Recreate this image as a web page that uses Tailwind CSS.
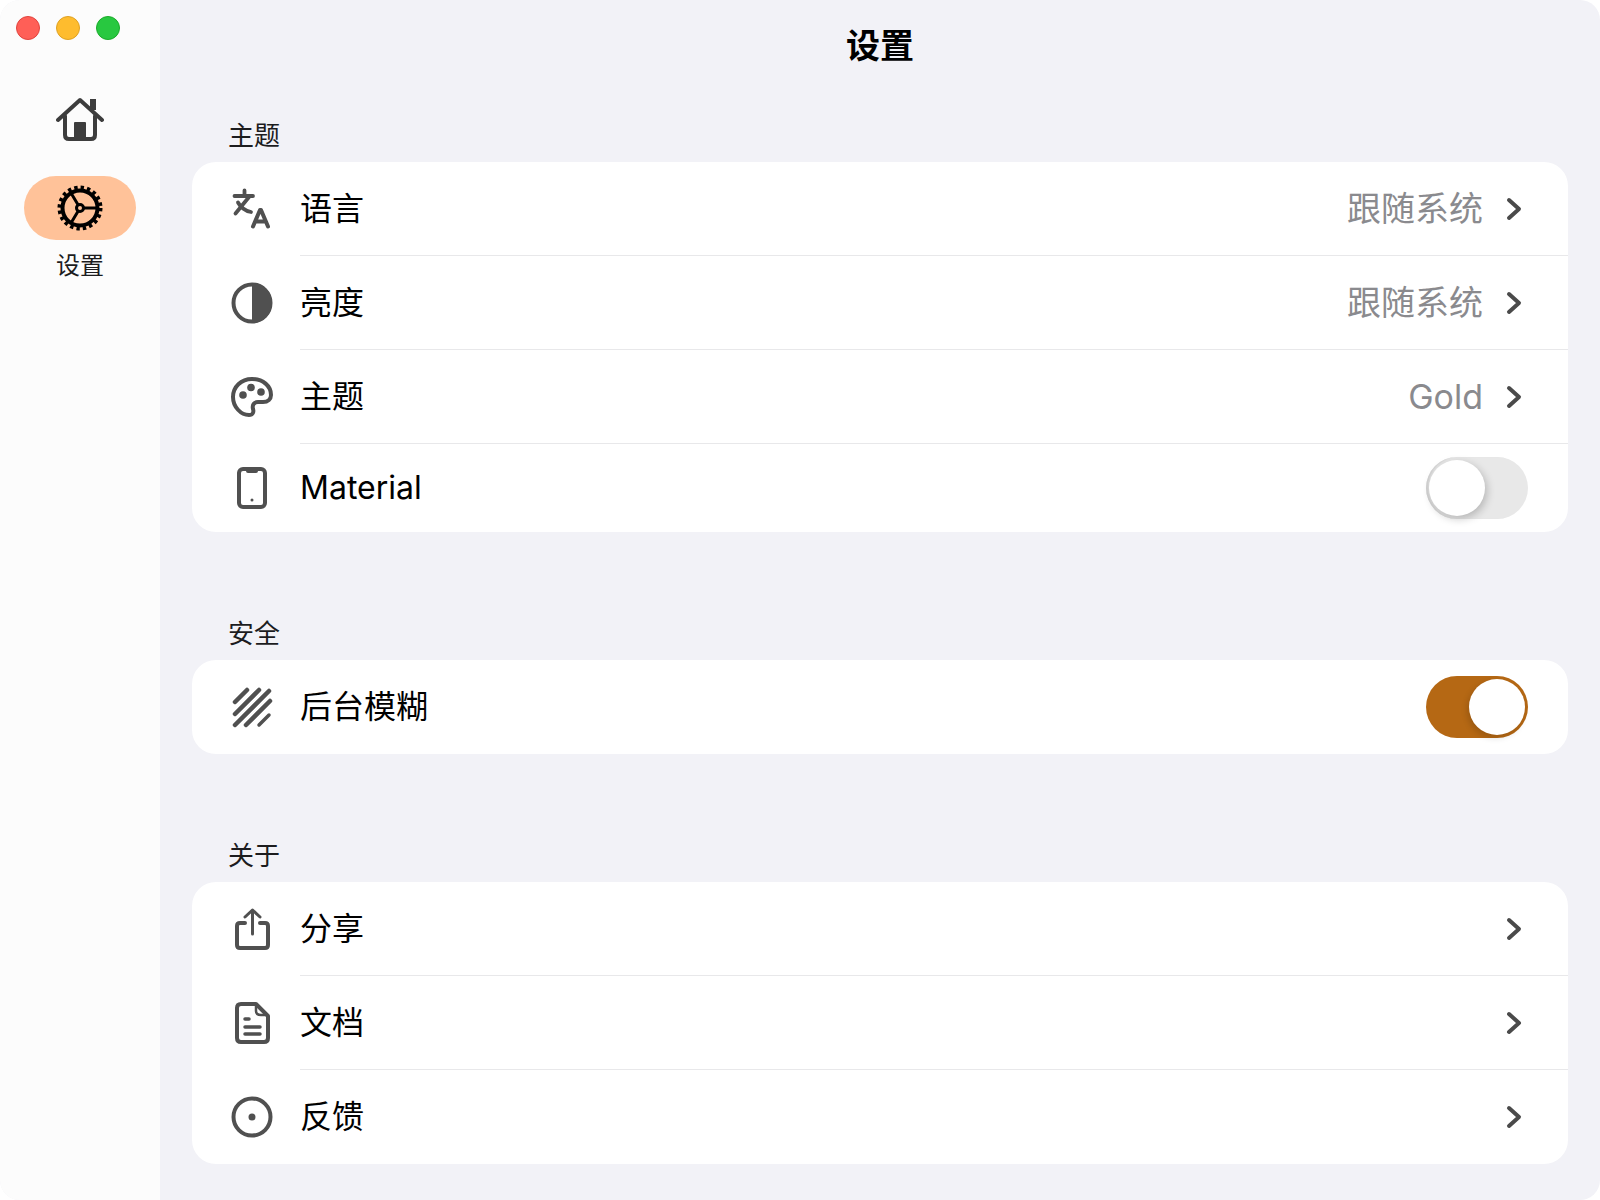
<!DOCTYPE html>
<html lang="zh">
<head>
<meta charset="utf-8">
<script src="https://cdn.jsdelivr.net/npm/@tailwindcss/browser@4"></script>
</head>
<body class="bg-white">
<div class="w-[1600px] h-[1200px] flex overflow-hidden rounded-[20px] bg-[#f2f2f7] font-['Inter','Noto_Sans_CJK_SC',sans-serif] text-black">
  <aside class="w-[160px] shrink-0 bg-[#fcfcfc] flex flex-col items-center">
    <div class="w-full flex gap-[16px] pl-[16px] pt-[16px]">
      <span class="size-[24px] rounded-full bg-[#ff5f57] border border-[#e0443e]"></span>
      <span class="size-[24px] rounded-full bg-[#febc2e] border border-[#dea123]"></span>
      <span class="size-[24px] rounded-full bg-[#28c840] border border-[#1aab29]"></span>
    </div>
    <svg class="mt-[56px]" width="48" height="48" viewBox="0 0 48 48" fill="none" stroke="#3d3d3d" stroke-width="4" stroke-linecap="round" stroke-linejoin="round">
      <path d="M2 24 L24 4 L46 24"/>
      <path d="M9 20 V39 Q9 43 13 43 H35 Q39 43 39 39 V20"/>
      <path d="M37 14 V3" stroke-width="6" stroke-linecap="butt"/>
      <rect x="18" y="26" width="12" height="17" fill="#3d3d3d" stroke="none" rx="1"/>
    </svg>
    <div class="mt-[32px] w-[112px] h-[64px] rounded-full bg-[#ffc299] flex items-center justify-center">
      <svg width="46" height="46" viewBox="0 0 46 46" fill="none" stroke="#000">
        <circle cx="23" cy="23" r="17.500" stroke-width="4"/>
        <circle cx="23" cy="23" r="20.500" stroke-width="4" stroke-dasharray="3.400 3.040"/>
        <circle cx="23" cy="23" r="3.500" stroke-width="3"/>
        <path d="M26.500 23 H40 M21.200 20 L14 8 M21.200 26 L14 38" stroke-width="3"/>
      </svg>
    </div>
    <div class="mt-[9px] text-[24px] leading-[34px] text-[#1c1c1e]">设置</div>
  </aside>
  <main class="flex-1 min-w-0 pl-[32px] pr-[32px]">
    <h1 class="h-[90px] flex items-center justify-center text-[34px] font-semibold">设置</h1>
    <section>
      <h2 class="pl-[36px] h-[72px] flex items-end pb-[4px] text-[26px] leading-[44px] font-normal text-[#1c1c1e]">主题</h2>
      <div class="bg-white rounded-[24px] overflow-hidden">
        <div class="h-[93px] flex items-center pl-[38px] pr-[43px]">
          <svg class="w-[44px] h-[44px] shrink-0" viewBox="0 0 44 44" fill="none" stroke="#505050" stroke-width="4" stroke-linecap="round" stroke-linejoin="round">
            <path d="M4.500 9 H23 M14.500 3.500 V8 M19 10 L5.500 26.500 M8 15.500 C11 21 16 24 21 25" stroke-width="3.800"/>
            <path d="M23 39.500 L30 23 H31 L38 39.500 M25.500 34.500 H35.500"/>
          </svg>
          <span class="ml-[26px] flex-1 text-[32px]">语言</span>
          <span class="text-[34px] text-[#8a8a8e]">跟随系统</span>
          <svg class="ml-[22px]" width="20" height="24" viewBox="0 0 20 24" fill="none" stroke="#4a4a4a" stroke-width="4" stroke-linecap="round" stroke-linejoin="round"><path d="M4 3 L14 12 L4 21"/></svg>
        </div>
        <div class="ml-[108px] h-px bg-[#e8e8ea]"></div>
        <div class="h-[93px] flex items-center pl-[38px] pr-[43px]">
          <svg class="w-[44px] h-[44px] shrink-0" viewBox="0 0 44 44" fill="none">
            <circle cx="22" cy="22" r="18.500" stroke="#505050" stroke-width="4"/>
            <path d="M22 2 A20 20 0 0 1 22 42 Z" fill="#505050"/>
          </svg>
          <span class="ml-[26px] flex-1 text-[32px]">亮度</span>
          <span class="text-[34px] text-[#8a8a8e]">跟随系统</span>
          <svg class="ml-[22px]" width="20" height="24" viewBox="0 0 20 24" fill="none" stroke="#4a4a4a" stroke-width="4" stroke-linecap="round" stroke-linejoin="round"><path d="M4 3 L14 12 L4 21"/></svg>
        </div>
        <div class="ml-[108px] h-px bg-[#e8e8ea]"></div>
        <div class="h-[93px] flex items-center pl-[38px] pr-[43px]">
          <svg class="w-[44px] h-[44px] shrink-0" viewBox="0 0 44 44" fill="none">
            <path d="M22 4 C11 4 3 12 3 22 C3 32 11 40 19 40 C23 40 24 37 23 34 C22 30 24 27 28 27 H33 C38 27 41 24 41 20 C41 11 33 4 22 4 Z" stroke="#505050" stroke-width="4"/>
            <circle cx="13" cy="20" r="3.800" fill="#505050"/>
            <circle cx="21" cy="12.500" r="3.800" fill="#505050"/>
            <circle cx="31" cy="17" r="3.800" fill="#505050"/>
          </svg>
          <span class="ml-[26px] flex-1 text-[32px]">主题</span>
          <span class="text-[34px] text-[#8a8a8e]">Gold</span>
          <svg class="ml-[22px]" width="20" height="24" viewBox="0 0 20 24" fill="none" stroke="#4a4a4a" stroke-width="4" stroke-linecap="round" stroke-linejoin="round"><path d="M4 3 L14 12 L4 21"/></svg>
        </div>
        <div class="ml-[108px] h-px bg-[#e8e8ea]"></div>
        <div class="h-[88px] flex items-center pl-[38px] pr-[40px]">
          <svg class="w-[44px] h-[44px] shrink-0" viewBox="0 0 44 44" fill="none">
            <rect x="9" y="3" width="26" height="38" rx="4" stroke="#505050" stroke-width="4"/>
            <path d="M16 4 H28 V5 Q28 7 26 7 H18 Q16 7 16 5 Z" fill="#505050"/>
            <circle cx="22" cy="34" r="1.500" fill="#505050"/>
          </svg>
          <span class="ml-[26px] flex-1 text-[32px]">Material</span>
          <div class="w-[102px] h-[62px] rounded-full bg-[#e8e8e8] p-[3px] shadow-[inset_3px_0_2px_-1px_#d0d0d0]">
            <div class="size-[56px] rounded-full bg-white shadow-[2px_3px_8px_rgba(0,0,0,0.22)]"></div>
          </div>
        </div>
      </div>
    </section>
    <section>
      <h2 class="pl-[36px] h-[128px] flex items-end pb-[4px] text-[26px] leading-[44px] font-normal text-[#1c1c1e]">安全</h2>
      <div class="bg-white rounded-[24px] overflow-hidden">
        <div class="h-[94px] flex items-center pl-[38px] pr-[40px]">
          <svg class="w-[44px] h-[44px] shrink-0" viewBox="0 0 44 44" fill="none" stroke="#505050" stroke-linecap="round">
            <path d="M5 17 L17 5 M5 29 L29 5" stroke-width="4.500"/>
            <path d="M5 40 L39 6 M16 40 L40 16" stroke-width="4.500"/>
            <path d="M29 40 L39 30" stroke-width="3.500"/>
          </svg>
          <span class="ml-[26px] flex-1 text-[32px]">后台模糊</span>
          <div class="w-[102px] h-[62px] rounded-full bg-[#b56814] p-[3px] flex justify-end">
            <div class="size-[56px] rounded-full bg-white shadow-[-2px_3px_6px_rgba(0,0,0,0.15)]"></div>
          </div>
        </div>
      </div>
    </section>
    <section>
      <h2 class="pl-[36px] h-[128px] flex items-end pb-[4px] text-[26px] leading-[44px] font-normal text-[#1c1c1e]">关于</h2>
      <div class="bg-white rounded-[24px] overflow-hidden">
        <div class="h-[93px] flex items-center pl-[38px] pr-[43px]">
          <svg class="w-[44px] h-[44px] shrink-0" viewBox="0 0 44 44" fill="none" stroke="#505050" stroke-width="4" stroke-linecap="round" stroke-linejoin="round">
            <path d="M15 16 H10 Q7 16 7 19 V38 Q7 41 10 41 H35 Q38 41 38 38 V19 Q38 16 35 16 H30"/>
            <path d="M22.500 27 V3 M15 10 L22.500 3 L30 10" stroke-width="3"/>
          </svg>
          <span class="ml-[26px] flex-1 text-[32px]">分享</span>
          <svg class="ml-[22px]" width="20" height="24" viewBox="0 0 20 24" fill="none" stroke="#4a4a4a" stroke-width="4" stroke-linecap="round" stroke-linejoin="round"><path d="M4 3 L14 12 L4 21"/></svg>
        </div>
        <div class="ml-[108px] h-px bg-[#e8e8ea]"></div>
        <div class="h-[93px] flex items-center pl-[38px] pr-[43px]">
          <svg class="w-[44px] h-[44px] shrink-0" viewBox="0 0 44 44" fill="none" stroke="#505050" stroke-width="4" stroke-linecap="round" stroke-linejoin="round">
            <path d="M11 3 H26 L38 15 V37 Q38 41 34 41 H11 Q7 41 7 37 V7 Q7 3 11 3 Z"/>
            <path d="M26 5 V10 Q26 14 31 14 H36" stroke-width="2.500"/>
            <path d="M15 18 H19 M15 26 H30 M15 33 H30" stroke-width="3.500"/>
          </svg>
          <span class="ml-[26px] flex-1 text-[32px]">文档</span>
          <svg class="ml-[22px]" width="20" height="24" viewBox="0 0 20 24" fill="none" stroke="#4a4a4a" stroke-width="4" stroke-linecap="round" stroke-linejoin="round"><path d="M4 3 L14 12 L4 21"/></svg>
        </div>
        <div class="ml-[108px] h-px bg-[#e8e8ea]"></div>
        <div class="h-[94px] flex items-center pl-[38px] pr-[43px]">
          <svg class="w-[44px] h-[44px] shrink-0" viewBox="0 0 44 44" fill="none">
            <circle cx="22" cy="22" r="18.500" stroke="#505050" stroke-width="4"/>
            <circle cx="22" cy="22" r="3.500" fill="#505050"/>
          </svg>
          <span class="ml-[26px] flex-1 text-[32px]">反馈</span>
          <svg class="ml-[22px]" width="20" height="24" viewBox="0 0 20 24" fill="none" stroke="#4a4a4a" stroke-width="4" stroke-linecap="round" stroke-linejoin="round"><path d="M4 3 L14 12 L4 21"/></svg>
        </div>
      </div>
    </section>
  </main>
</div>
</body>
</html>
